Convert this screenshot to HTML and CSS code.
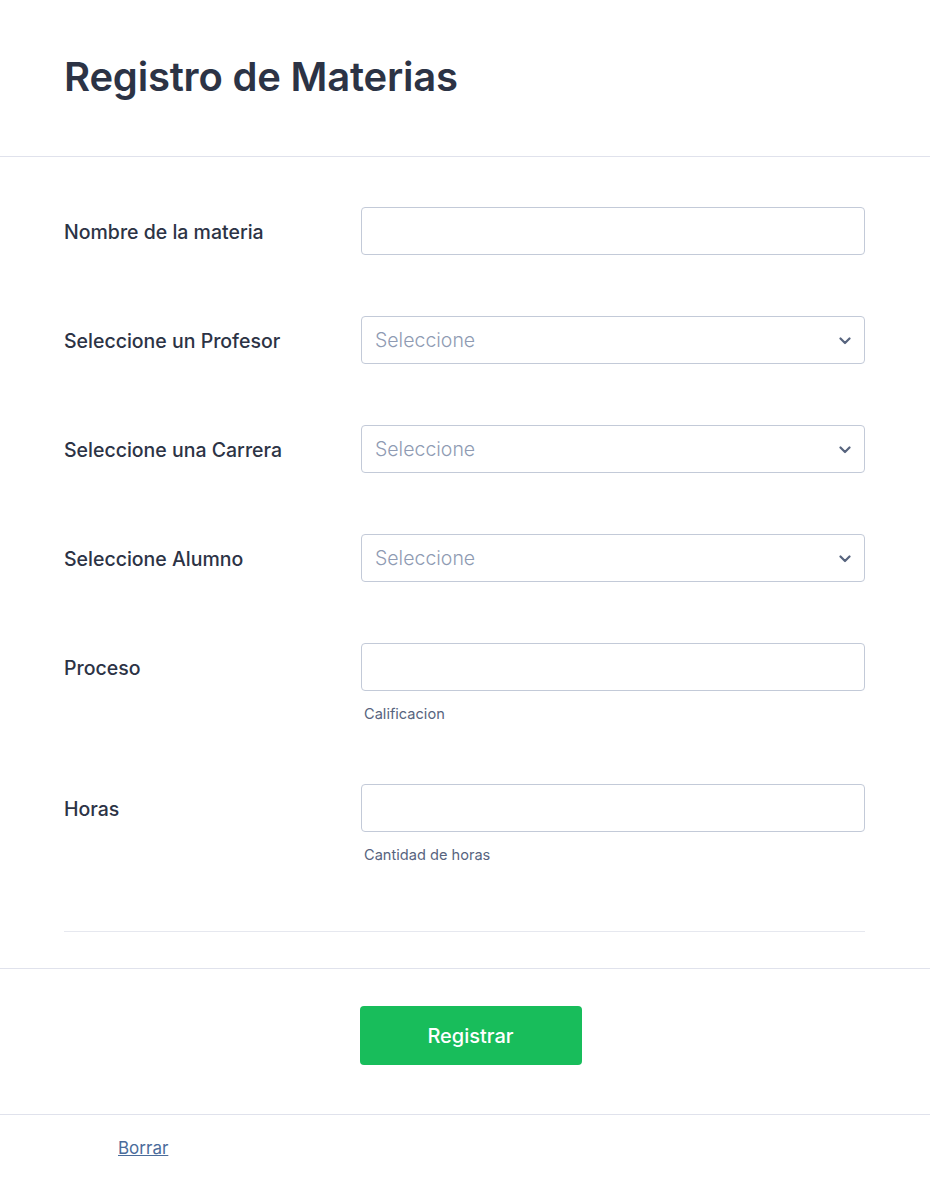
FILE: index.html
```html
<!DOCTYPE html>
<html lang="es">
<head>
<meta charset="utf-8">
<title>Registro de Materias</title>
<link rel="stylesheet" href="styles.css">
</head>
<body>
<div class="page">
  <header class="header">
    <h1 class="title">Registro de Materias</h1>
  </header>
  <form class="form">
    <div class="rows">
      <div class="row">
        <label class="label">Nombre de la materia</label>
        <div class="control"><input class="input" type="text"></div>
      </div>
      <div class="row">
        <label class="label">Seleccione un Profesor</label>
        <div class="control">
          <div class="select"><span class="placeholder">Seleccione</span>
            <svg class="chev" width="12" height="8" viewBox="0 0 12 8"><path d="M1.5 1.5 L6 6 L10.5 1.5" fill="none" stroke="#57647e" stroke-width="2.2" stroke-linecap="round" stroke-linejoin="round"/></svg>
          </div>
        </div>
      </div>
      <div class="row">
        <label class="label">Seleccione una Carrera</label>
        <div class="control">
          <div class="select"><span class="placeholder">Seleccione</span>
            <svg class="chev" width="12" height="8" viewBox="0 0 12 8"><path d="M1.5 1.5 L6 6 L10.5 1.5" fill="none" stroke="#57647e" stroke-width="2.2" stroke-linecap="round" stroke-linejoin="round"/></svg>
          </div>
        </div>
      </div>
      <div class="row">
        <label class="label">Seleccione Alumno</label>
        <div class="control">
          <div class="select"><span class="placeholder">Seleccione</span>
            <svg class="chev" width="12" height="8" viewBox="0 0 12 8"><path d="M1.5 1.5 L6 6 L10.5 1.5" fill="none" stroke="#57647e" stroke-width="2.2" stroke-linecap="round" stroke-linejoin="round"/></svg>
          </div>
        </div>
      </div>
      <div class="row">
        <label class="label">Proceso</label>
        <div class="control">
          <input class="input" type="text">
          <div class="sublabel">Calificacion</div>
        </div>
      </div>
      <div class="row">
        <label class="label">Horas</label>
        <div class="control">
          <input class="input" type="text">
          <div class="sublabel">Cantidad de horas</div>
        </div>
      </div>
    </div>
    <div class="divider"></div>
  </form>
  <div class="actions">
    <button class="submit" type="button">Registrar</button>
  </div>
  <div class="footer">
    <a class="clear" href="#">Borrar</a>
  </div>
</div>
</body>
</html>
```
FILE: styles.css
```css
* { box-sizing: border-box; }
html, body { margin: 0; padding: 0; background: #ffffff; }
body {
  font-family: Inter, "Noto Sans", "Liberation Sans", sans-serif;
  color: #2c3345;
}
.header {
  height: 157px;
  padding: 0 64px;
  border-bottom: 1px solid #e0e2ec;
  display: flex;
  align-items: center;
}
.title {
  margin: 0 0 2px 0;
  font-size: 40px;
  font-weight: 600;
  line-height: 48px;
  color: #2c3345;
  letter-spacing: -0.2px;
}
.form {
  padding: 50px 65px 0 64px;
}
.rows {
  display: flex;
  flex-direction: column;
  gap: 61px;
}
.row {
  display: flex;
  align-items: flex-start;
}
.label {
  width: 297px;
  height: 48px;
  flex: none;
  padding-top: 2px;
  font-size: 19.5px;
  font-weight: 500;
  line-height: 46px;
  color: #2c3345;
}
.control {
  flex: 1;
  display: flex;
  flex-direction: column;
}
.input, .select {
  width: 100%;
  height: 48px;
  border: 1px solid #c3cad8;
  border-radius: 4px;
  background: #ffffff;
  margin: 0;
  padding: 0 14px;
  font-family: inherit;
  font-size: 18px;
}
.select {
  display: flex;
  align-items: center;
  justify-content: space-between;
  padding: 0 13px 0 13px;
}
.placeholder {
  color: #8f9bb3;
  font-weight: 300;
  font-size: 19.5px;
  line-height: 24px;
}
.chev { display: block; margin-top: 1px; }
.sublabel {
  margin-top: 15px;
  padding-left: 3px;
  font-size: 14.6px;
  line-height: 17px;
  color: #57647e;
}
.divider {
  margin-top: 67px;
  height: 1px;
  background: #e6e8ef;
}
.actions {
  margin-top: 36px;
  border-top: 1px solid #e0e2ec;
  border-bottom: 1px solid #e0e2ec;
  padding: 37px 0 49px;
  display: flex;
  justify-content: center;
}
.submit {
  width: 222px;
  height: 59px;
  border: none;
  border-radius: 4px;
  background: #18bd5b;
  color: #ffffff;
  font-family: inherit;
  font-size: 20px;
  font-weight: 500;
  margin-left: 11px;
}
.footer {
  padding: 21px 0 0 118px;
}
.clear {
  font-size: 17px;
  line-height: 24px;
  color: #4a6c9b;
  text-decoration: underline;
}
```
